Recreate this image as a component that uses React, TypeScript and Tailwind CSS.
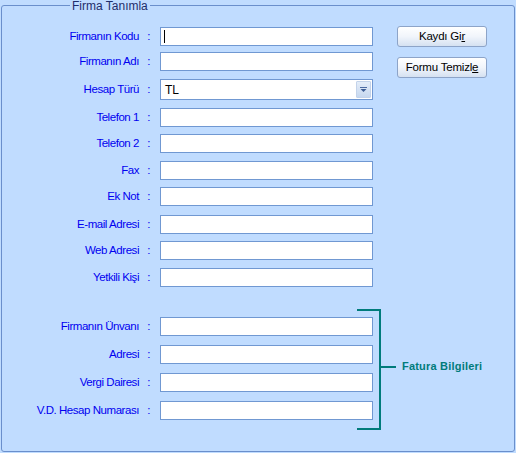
import React from "react";

const font = { fontFamily: '"Liberation Sans", Arial, sans-serif' };

type Row = { label: string; mt: string; combo?: boolean; caret?: boolean };

const topRows: Row[] = [
  { label: "Firmanın Kodu", mt: "mt-0", caret: true },
  { label: "Firmanın Adı", mt: "mt-[6px]" },
  { label: "Hesap Türü", mt: "mt-[8px]", combo: true },
  { label: "Telefon 1", mt: "mt-[8px]" },
  { label: "Telefon 2", mt: "mt-[7px]" },
  { label: "Fax", mt: "mt-[8px]" },
  { label: "Ek Not", mt: "mt-[7px]" },
  { label: "E-mail Adresi", mt: "mt-[9px]" },
  { label: "Web Adresi", mt: "mt-[7px]" },
  { label: "Yetkili Kişi", mt: "mt-[8px]" },
];

const billingRows: Row[] = [
  { label: "Firmanın Ünvanı", mt: "mt-0" },
  { label: "Adresi", mt: "mt-[9px]" },
  { label: "Vergi Dairesi", mt: "mt-[9px]" },
  { label: "V.D. Hesap Numarası", mt: "mt-[9px]" },
];

function Label({ text }: { text: string }) {
  return (
    <div className="w-[148px] flex justify-end items-center text-[11.5px] leading-none text-[#0000f0] tracking-[-0.45px] whitespace-nowrap">
      <span>{text}</span>
      <span className="w-[11px] text-right">:</span>
    </div>
  );
}

function FieldRow({ row }: { row: Row }) {
  if (row.combo) {
    return (
      <div className={`flex items-center ${row.mt}`}>
        <Label text={row.label} />
        <div className="ml-[10px] w-[213px] h-[21px] bg-white border border-[#7098d2] flex items-center">
          <span className="pl-[4px] flex-1 text-[12px] text-black">TL</span>
          <div className="mr-px w-[15px] h-[17px] rounded-[1px] flex items-center justify-center border border-[#c3d3ea] bg-gradient-to-b from-[#e4edf9] to-[#c7d8ef]">
            <svg width="7" height="5" viewBox="0 0 7 5">
              <rect x="0" y="0" width="7" height="1" fill="#4d6ca3" />
              <path d="M0.5 2 H6.5 L3.5 5 Z" fill="#3d5d95" />
            </svg>
          </div>
        </div>
      </div>
    );
  }
  return (
    <div className={`flex items-center ${row.mt}`}>
      <Label text={row.label} />
      <div className="ml-[10px] w-[213px] h-[19px] bg-white border border-[#7098d2] flex items-center">
        {row.caret && <div className="ml-[3px] w-px h-[13px] bg-black" />}
      </div>
    </div>
  );
}

function XpButton({ text, hot, mt }: { text: string; hot: string; mt: string }) {
  return (
    <button
      className={`w-[90px] h-[21px] ${mt} rounded-[3px] border border-[#8da4c8] bg-gradient-to-b from-[#ffffff] via-[#f1f5fb] to-[#d5e1f1] text-[11.5px] tracking-[-0.2px] text-black leading-none`}
    >
      {text}
      <span className="underline underline-offset-[1px]">{hot}</span>
    </button>
  );
}

export default function App() {
  return (
    <div className="w-[516px] h-[453px] bg-[#c0dcff] pt-[5px] pl-[1px]" style={font}>
      <div className="relative w-[514px] h-[447px] border border-[#6a8fcc] rounded-[3px] pt-[21px]">
        <span className="absolute -top-[6px] left-[68px] px-[2px] bg-[#c0dcff] text-[12px] leading-[13px] text-[#1f2e6b]">
          Firma Tanımla
        </span>

        <div className="flex">
          <div className="flex flex-col">
            {topRows.map((r) => (
              <FieldRow key={r.label} row={r} />
            ))}
          </div>
          <div className="flex flex-col pl-[24px] -mt-px">
            <XpButton text="Kaydı Gi" hot="r" mt="mt-0" />
            <XpButton text="Formu Temizl" hot="e" mt="mt-[10px]" />
          </div>
        </div>

        <div className="flex items-start mt-[22px]">
          <div className="flex flex-col pt-[8px]">
            {billingRows.map((r) => (
              <FieldRow key={r.label} row={r} />
            ))}
          </div>
          <div className="flex items-center h-[121px] -ml-[16px]">
            <div className="w-[24px] h-[121px] border-y-2 border-r-2 border-[#007b7b]" />
            <div className="flex items-center pb-[6px]">
              <div className="w-[15px] h-[2px] bg-[#007b7b]" />
              <span className="ml-[6px] text-[11px] font-bold tracking-[0.2px] text-[#007b7b] leading-none">
                Fatura Bilgileri
              </span>
            </div>
          </div>
        </div>
      </div>
    </div>
  );
}
